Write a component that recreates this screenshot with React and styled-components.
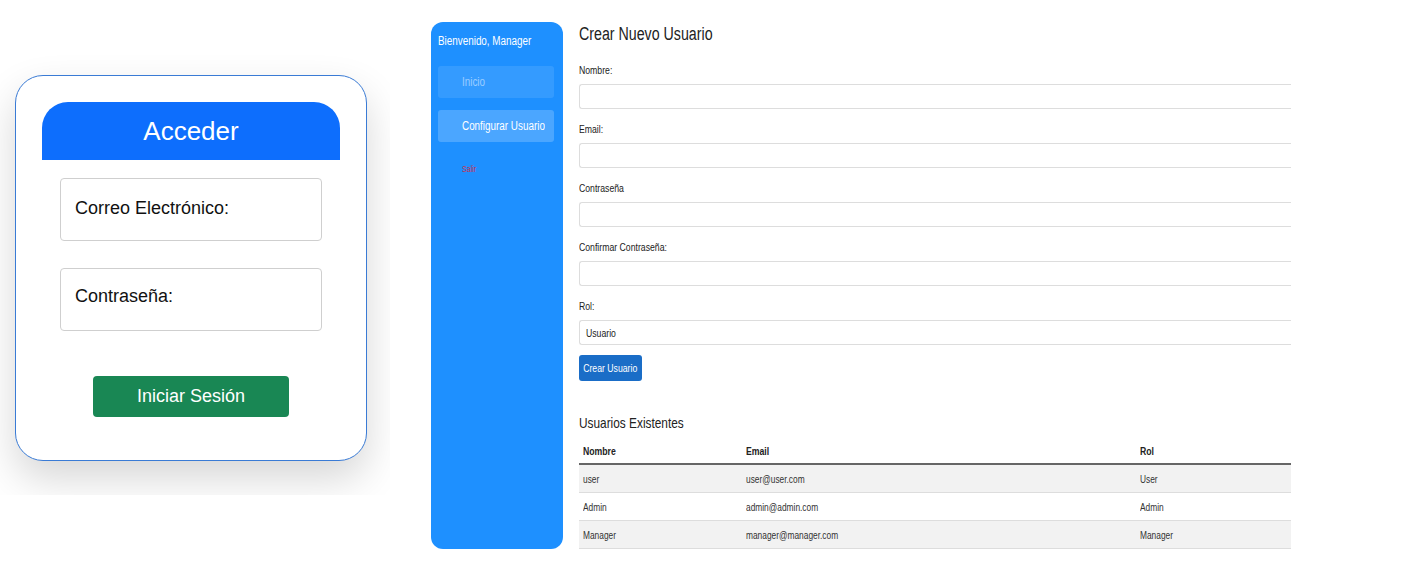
import React from 'react';
import styled, { createGlobalStyle } from 'styled-components';

const GlobalStyle = createGlobalStyle`
  body {
    margin: 0;
    background: #ffffff;
    font-family: "Liberation Sans", Arial, sans-serif;
  }
`;

const Page = styled.div`
  display: flex;
  align-items: flex-start;
  width: 1402px;
  height: 568px;
`;

/* ---------- login ---------- */

const LoginPanel = styled.div`
  width: 390px;
  height: 495px;
  overflow: hidden;
  background: #fff;
  padding: 75px 0 0 15px;
  box-sizing: border-box;
  flex-shrink: 0;
`;

const Card = styled.div`
  width: 352px;
  height: 386px;
  box-sizing: border-box;
  background: #fff;
  border: 1px solid #3a7bd5;
  border-radius: 28px;
  box-shadow: 0 18px 40px rgba(0, 0, 0, 0.16);
  padding: 26px 26px 0;
  display: flex;
  flex-direction: column;
  align-items: center;
`;

const CardHeader = styled.div`
  align-self: stretch;
  height: 58px;
  background: #0d6efd;
  border-radius: 26px 26px 0 0;
  color: #fff;
  font-size: 26px;
  display: flex;
  align-items: center;
  justify-content: center;
  margin-bottom: 18px;
`;

const FieldBox = styled.label`
  width: 262px;
  height: 63px;
  box-sizing: border-box;
  border: 1px solid #cfcfcf;
  border-radius: 4px;
  padding: 0 14px;
  display: flex;
  align-items: center;
  font-size: 18px;
  color: #111;
  margin-bottom: ${(p) => p.gap}px;
  padding-bottom: ${(p) => p.shift}px;
`;

const LoginButton = styled.button`
  width: 196px;
  height: 41px;
  border: none;
  border-radius: 4px;
  background: #198754;
  color: #fff;
  font-family: inherit;
  font-size: 18px;
  cursor: pointer;
`;

/* ---------- dashboard ---------- */

// the dashboard text is set in a condensed face; no narrow font is installed,
// so squeeze Liberation Sans horizontally
const Narrow = styled.span`
  display: inline-block;
  white-space: nowrap;
  transform: scaleX(${(p) => p.scale || 0.79});
  transform-origin: ${(p) => (p.center ? 'center' : 'left')} center;
`;

const Dashboard = styled.div`
  display: flex;
  gap: 16px;
  margin-left: 41px;
  padding-top: 22px;
`;

const Sidebar = styled.aside`
  width: 132px;
  height: 527px;
  box-sizing: border-box;
  background: #1e90ff;
  border-radius: 12px;
  padding: 11px 9px 0 7px;
  display: flex;
  flex-direction: column;
`;

const Welcome = styled.div`
  color: #fff;
  font-size: 12.5px;
  line-height: 16px;
  margin-bottom: 17px;
`;

const NavItem = styled.a`
  height: 32px;
  display: flex;
  align-items: center;
  padding-left: 24px;
  border-radius: 3px;
  font-size: 12.5px;
  margin-bottom: 12px;
  background: ${(p) => (p.active ? 'rgba(255,255,255,0.2)' : 'rgba(255,255,255,0.1)')};
  color: ${(p) => (p.active ? '#fff' : 'rgba(255,255,255,0.5)')};
`;

const Logout = styled.a`
  padding: 10px 0 0 24px;
  color: #c8324f;
  font-size: 9px;
`;

const Main = styled.main`
  width: 712px;
  color: #222;
`;

const Title = styled.h2`
  margin: 0 0 17px;
  font-weight: normal;
  font-size: 18px;
  line-height: 24px;
`;

const FieldLabel = styled.div`
  font-size: 11px;
  line-height: 14px;
  margin-bottom: 7px;
  color: #222;
`;

const TextInput = styled.div`
  height: 25px;
  box-sizing: border-box;
  border: 1px solid #ddd;
  border-right: none;
  border-radius: 3px 0 0 3px;
  margin-bottom: 13px;
  display: flex;
  align-items: center;
  padding-left: 6px;
  font-size: 11px;
`;

const CreateButton = styled.button`
  width: 63px;
  height: 26px;
  padding: 0;
  border: none;
  border-radius: 3px;
  background: #1a6dc7;
  color: #fff;
  font-family: inherit;
  font-size: 11px;
  margin-top: -3px;
  display: flex;
  align-items: center;
  justify-content: center;
`;

const SubTitle = styled.h3`
  margin: 32px 0 5px;
  font-weight: normal;
  font-size: 15px;
  line-height: 20px;
`;

const Table = styled.table`
  width: 712px;
  table-layout: fixed;
  border-collapse: collapse;
  font-size: 11px;
`;

const Th = styled.th`
  text-align: left;
  font-weight: bold;
  padding: 0 4px;
  height: 25px;
  border-bottom: 2px solid #666;
  width: ${(p) => p.w}px;
`;

const Row = styled.tr`
  background: ${(p) => (p.striped ? '#f2f2f2' : '#fff')};
`;

const Td = styled.td`
  padding: 0 4px;
  height: 27px;
  border-bottom: 1px solid #ddd;
  color: #333;
`;

const users = [
  { name: 'user', email: 'user@user.com', role: 'User' },
  { name: 'Admin', email: 'admin@admin.com', role: 'Admin' },
  { name: 'Manager', email: 'manager@manager.com', role: 'Manager' },
];

const fields = ['Nombre:', 'Email:', 'Contraseña', 'Confirmar Contraseña:'];

export default function App() {
  return (
    <>
      <GlobalStyle />
      <Page>
        <LoginPanel>
          <Card>
            <CardHeader>Acceder</CardHeader>
            <FieldBox gap={27} shift={2}>Correo Electrónico:</FieldBox>
            <FieldBox gap={45} shift={6}>Contraseña:</FieldBox>
            <LoginButton>Iniciar Sesión</LoginButton>
          </Card>
        </LoginPanel>

        <Dashboard>
          <Sidebar>
            <Welcome><Narrow>Bienvenido, Manager</Narrow></Welcome>
            <NavItem><Narrow>Inicio</Narrow></NavItem>
            <NavItem active><Narrow>Configurar Usuario</Narrow></NavItem>
            <Logout><Narrow>Salir</Narrow></Logout>
          </Sidebar>

          <Main>
            <Title><Narrow>Crear Nuevo Usuario</Narrow></Title>
            {fields.map((f) => (
              <div key={f}>
                <FieldLabel><Narrow>{f}</Narrow></FieldLabel>
                <TextInput />
              </div>
            ))}
            <FieldLabel><Narrow>Rol:</Narrow></FieldLabel>
            <TextInput><Narrow>Usuario</Narrow></TextInput>
            <CreateButton><Narrow center>Crear Usuario</Narrow></CreateButton>

            <SubTitle><Narrow>Usuarios Existentes</Narrow></SubTitle>
            <Table>
              <thead>
                <tr>
                  <Th w={155}><Narrow>Nombre</Narrow></Th>
                  <Th w={386}><Narrow>Email</Narrow></Th>
                  <Th w={147}><Narrow>Rol</Narrow></Th>
                </tr>
              </thead>
              <tbody>
                {users.map((u, i) => (
                  <Row key={u.name} striped={i % 2 === 0}>
                    <Td><Narrow scale={0.76}>{u.name}</Narrow></Td>
                    <Td><Narrow scale={0.76}>{u.email}</Narrow></Td>
                    <Td><Narrow scale={0.76}>{u.role}</Narrow></Td>
                  </Row>
                ))}
              </tbody>
            </Table>
          </Main>
        </Dashboard>
      </Page>
    </>
  );
}
